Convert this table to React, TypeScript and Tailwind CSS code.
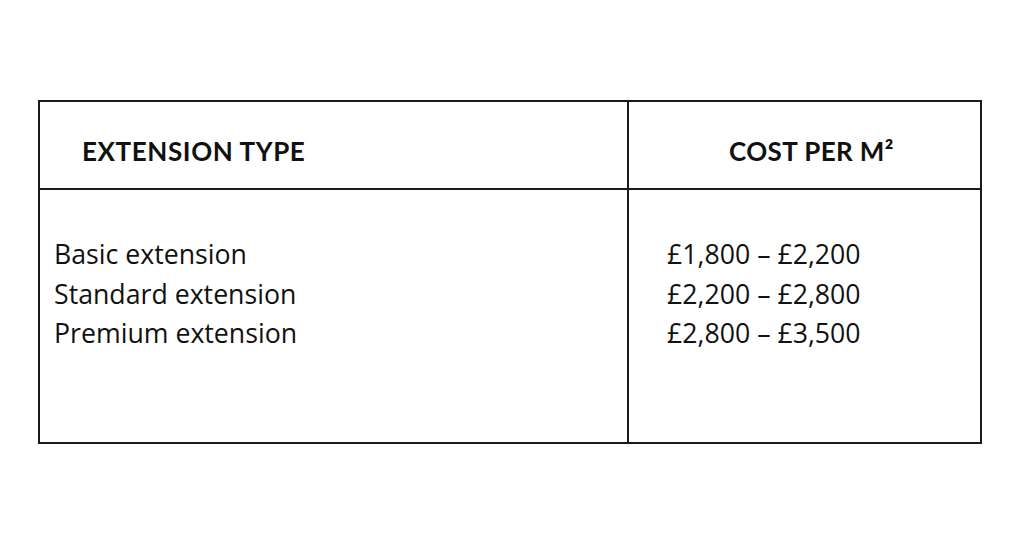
export default function App() {
  const rows = [
    ['Basic extension', '£1,800 – £2,200'],
    ['Standard extension', '£2,200 – £2,800'],
    ['Premium extension', '£2,800 – £3,500'],
  ]

  return (
    <div className="w-[1024px] h-[542px] bg-white pt-[100px] pl-[38px] text-[#111]" style={{ fontFamily: 'Lato, "Open Sans", sans-serif' }}>
      <div className="w-[944px] h-[344px] border-2 border-[#1a1a1a] grid grid-cols-[589px_1fr] grid-rows-[88px_1fr]">
        {/* Header */}
        <div className="border-r-2 border-b-2 border-[#1a1a1a] flex items-center pl-[42px] pt-[12px]">
          <span className="text-[26px] font-bold tracking-[0.6px]">EXTENSION TYPE</span>
        </div>
        <div className="border-b-2 border-[#1a1a1a] flex items-center pl-[100px] pt-[12px]">
          <span className="text-[26px] font-bold tracking-[0.4px]">COST PER M²</span>
        </div>

        {/* Body */}
        <div className="border-r-2 border-[#1a1a1a] pl-[14px] pt-[44px]" style={{ fontFamily: '"Open Sans", sans-serif' }}>
          {rows.map(([name]) => (
            <div key={name} className="text-[26.7px] leading-[39.5px]">{name}</div>
          ))}
        </div>
        <div className="pl-[38px] pt-[44px]" style={{ fontFamily: '"Open Sans", sans-serif' }}>
          {rows.map(([name, cost]) => (
            <div key={name} className="text-[26.7px] leading-[39.5px]">{cost}</div>
          ))}
        </div>
      </div>
    </div>
  )
}
